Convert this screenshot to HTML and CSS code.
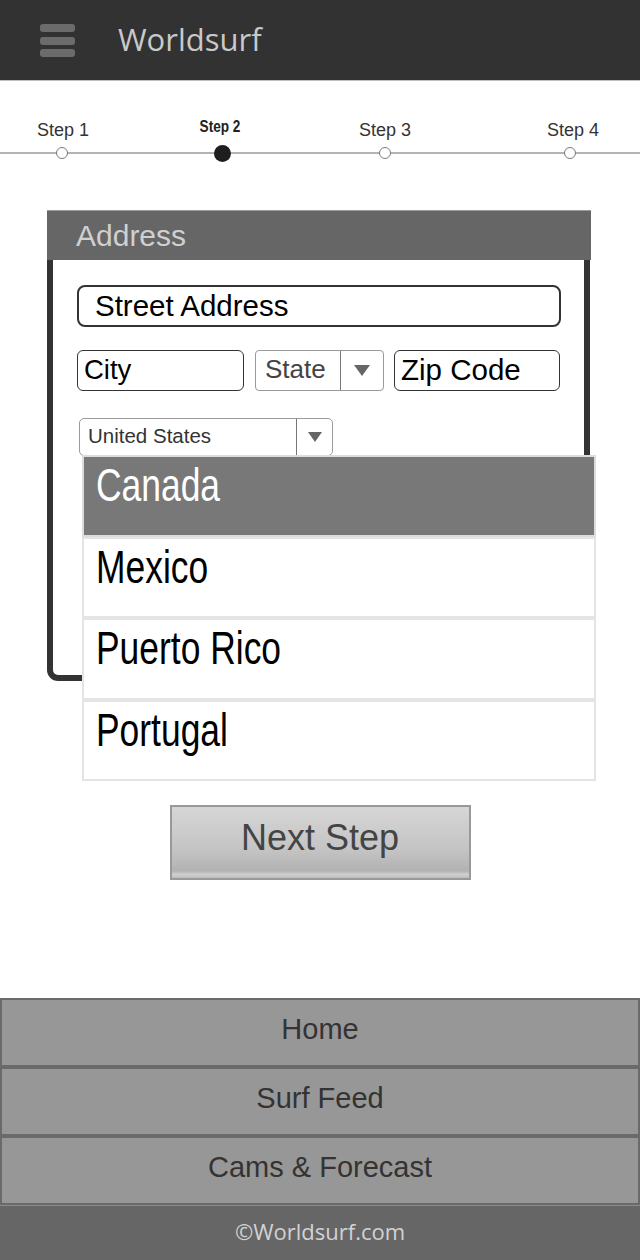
FILE: index.html
```html
<!DOCTYPE html>
<html lang="en">
<head>
<meta charset="utf-8">
<title>Worldsurf</title>
<link rel="stylesheet" href="styles.css">
</head>
<body>
<header class="topbar">
  <div class="burger"><span></span><span></span><span></span></div>
  <div class="brand">Worldsurf</div>
</header>

<div class="steps">
  <div class="step s1"><div class="label">Step 1</div><div class="dotwrap"><span class="dot"></span></div></div>
  <div class="step s2"><div class="label active"><span>Step 2</span></div><div class="dotwrap"><span class="dot on"></span></div></div>
  <div class="step s3"><div class="label">Step 3</div><div class="dotwrap"><span class="dot"></span></div></div>
  <div class="step s4"><div class="label">Step 4</div><div class="dotwrap"><span class="dot"></span></div></div>
</div>

<section class="card">
  <div class="card-head">Address</div>
  <div class="card-body">
    <div class="field street">Street Address</div>
    <div class="row">
      <div class="field city">City</div>
      <div class="select state"><span class="sel-text">State</span><span class="sel-arrow"><i></i></span></div>
      <div class="field zip">Zip Code</div>
    </div>
    <div class="country-wrap">
      <div class="select country"><span class="sel-text">United States</span><span class="sel-arrow"><i></i></span></div>
      <ul class="menu">
        <li class="opt sel"><span>Canada</span></li>
        <li class="opt"><span>Mexico</span></li>
        <li class="opt"><span>Puerto Rico</span></li>
        <li class="opt"><span>Portugal</span></li>
      </ul>
    </div>
  </div>
</section>

<button class="next">Next Step</button>

<nav class="bottom-nav">
  <a class="nav-item">Home</a>
  <a class="nav-item">Surf Feed</a>
  <a class="nav-item">Cams &amp; Forecast</a>
</nav>
<footer class="foot">©Worldsurf.com</footer>
</body>
</html>
```
FILE: styles.css
```css
* { box-sizing: border-box; }
html, body { margin: 0; padding: 0; }
body {
  width: 640px;
  min-height: 1260px;
  display: flex;
  flex-direction: column;
  background: #fff;
  font-family: "Liberation Sans", Arial, sans-serif;
  color: #000;
}

.topbar {
  height: 81px;
  background: #323232;
  border-bottom: 1px solid #bdbdbd;
  display: flex;
  align-items: center;
  padding-left: 40px;
  gap: 43px;
}
.burger {
  width: 35px;
  display: flex;
  flex-direction: column;
  gap: 4.5px;
  margin-top: 1px;
}
.burger span {
  display: block;
  height: 8px;
  border-radius: 3px;
  background: #6b6b6b;
}
.brand {
  font-family: "Open Sans", sans-serif;
  font-size: 31px;
  color: #c9c9c9;
  line-height: 40px;
  margin-top: -3px;
}

.steps {
  display: flex;
  padding-top: 36px;
  background: linear-gradient(#b3b3b3, #b3b3b3) 0 71px / 100% 2px no-repeat;
}
.step {
  width: 60px;
  display: flex;
  flex-direction: column;
  align-items: center;
}
.s1 { margin-left: 33px; }
.s2 { margin-left: 99px; }
.s3 { margin-left: 103px; }
.s4 { margin-left: 125px; }
.s4 .label { margin-left: 6px; }
.label {
  height: 26px;
  line-height: 26px;
  font-size: 18px;
  color: #333;
  white-space: nowrap;
}
.label.active {
  height: 20px;
  line-height: 20px;
  margin-bottom: 6px;
  margin-left: -4px;
  font-size: 16px;
  font-weight: bold;
  color: #222;
}
.label.active span {
  display: inline-block;
  transform: scaleX(0.85);
}
.dotwrap {
  height: 20px;
  display: flex;
  align-items: center;
  justify-content: center;
}
.s1 .dotwrap { margin-left: -3px; }
.dot {
  width: 12px;
  height: 12px;
  border-radius: 50%;
  background: #fff;
  border: 1.5px solid #7a7a7a;
}
.dot.on {
  width: 17px;
  height: 17px;
  background: #1e1e1e;
  border: none;
}

.card {
  margin: 47px 0 0 47px;
  width: 544px;
}
.card-head {
  height: 50px;
  background: #666;
  border-top: 1px solid #9a9a9a;
  color: #d0d0d0;
  font-size: 30px;
  line-height: 49px;
  padding-left: 29px;
}
.card-body {
  width: 543px;
  height: 421px;
  border: 6px solid #333;
  border-top: none;
  border-radius: 0 0 11px 11px;
  padding: 25px 0 0 24px;
}
.field {
  border: 1.5px solid #333;
  border-radius: 6px;
  height: 41px;
  font-size: 27px;
  line-height: 38px;
  padding-left: 6px;
  color: #000;
  white-space: nowrap;
}
.street {
  width: 484px;
  height: 42px;
  border-width: 2px;
  border-radius: 8px;
  padding-left: 16px;
  font-size: 29.5px;
}
.row {
  display: flex;
  margin-top: 23px;
}
.city { width: 167px; font-size: 27.5px; }
.zip { width: 166px; margin-left: 10px; font-size: 29.5px; }
.select {
  display: flex;
  border: 1px solid #9a9a9a;
  border-radius: 4px;
  color: #444;
  background: #fff;
}
.state {
  width: 129px;
  height: 41px;
  margin-left: 11px;
  font-size: 26px;
  line-height: 37px;
}
.sel-text {
  flex: 1;
  padding-left: 9px;
  white-space: nowrap;
}
.sel-arrow {
  border-left: 1px solid #777;
  display: flex;
  align-items: center;
  justify-content: center;
}
.state .sel-arrow { width: 43px; }
.sel-arrow i {
  display: block;
  width: 0;
  height: 0;
  border-left: 8px solid transparent;
  border-right: 8px solid transparent;
  border-top: 11px solid #666;
}
.country-wrap {
  position: relative;
  margin: 27px 0 0 2px;
}
.country {
  width: 254px;
  height: 38px;
  border-radius: 5px;
  font-size: 20.5px;
  line-height: 34px;
  color: #333;
}
.country .sel-text { padding-left: 8px; }
.country .sel-arrow { width: 36px; }
.country .sel-arrow i {
  border-left-width: 7px;
  border-right-width: 7px;
  border-top-width: 10px;
}
.menu {
  position: absolute;
  top: 37px;
  left: 3px;
  width: 514px;
  margin: 0;
  padding: 0;
  list-style: none;
}
.opt {
  height: 81.5px;
  border: 2px solid #e4e4e4;
  background: #fff;
  padding: 5px 0 0 12px;
  font-size: 46px;
  line-height: 46px;
  color: #000;
}
.opt span {
  display: inline-block;
  transform: scaleX(0.77);
  transform-origin: 0 50%;
  white-space: nowrap;
}
.opt.sel {
  background: #787878;
  border-color: #dcdcdc;
  color: #fff;
}

.next {
  display: block;
  margin: 124px auto 0;
  width: 301px;
  height: 75px;
  border: 2px solid #999;
  background: linear-gradient(#d6d6d6 0%, #c4c4c4 60%, #b2b2b2 90%, #d0d0d0 95%, #bdbdbd 100%);
  font-family: "Liberation Sans", Arial, sans-serif;
  font-size: 36px;
  color: #444;
  padding: 0 0 10px;
}

.bottom-nav {
  margin-top: auto;
  display: flex;
  flex-direction: column;
}
.nav-item {
  height: 69px;
  border: 2px solid #6a6a6a;
  background: #979797;
  color: #333;
  font-size: 29px;
  line-height: 58px;
  text-align: center;
}
.foot {
  height: 55px;
  background: #666;
  border-top: 1px solid #8a8a8a;
  color: #d2d2d2;
  font-family: "Open Sans", sans-serif;
  font-size: 22px;
  line-height: 50px;
  text-align: center;
}
```
